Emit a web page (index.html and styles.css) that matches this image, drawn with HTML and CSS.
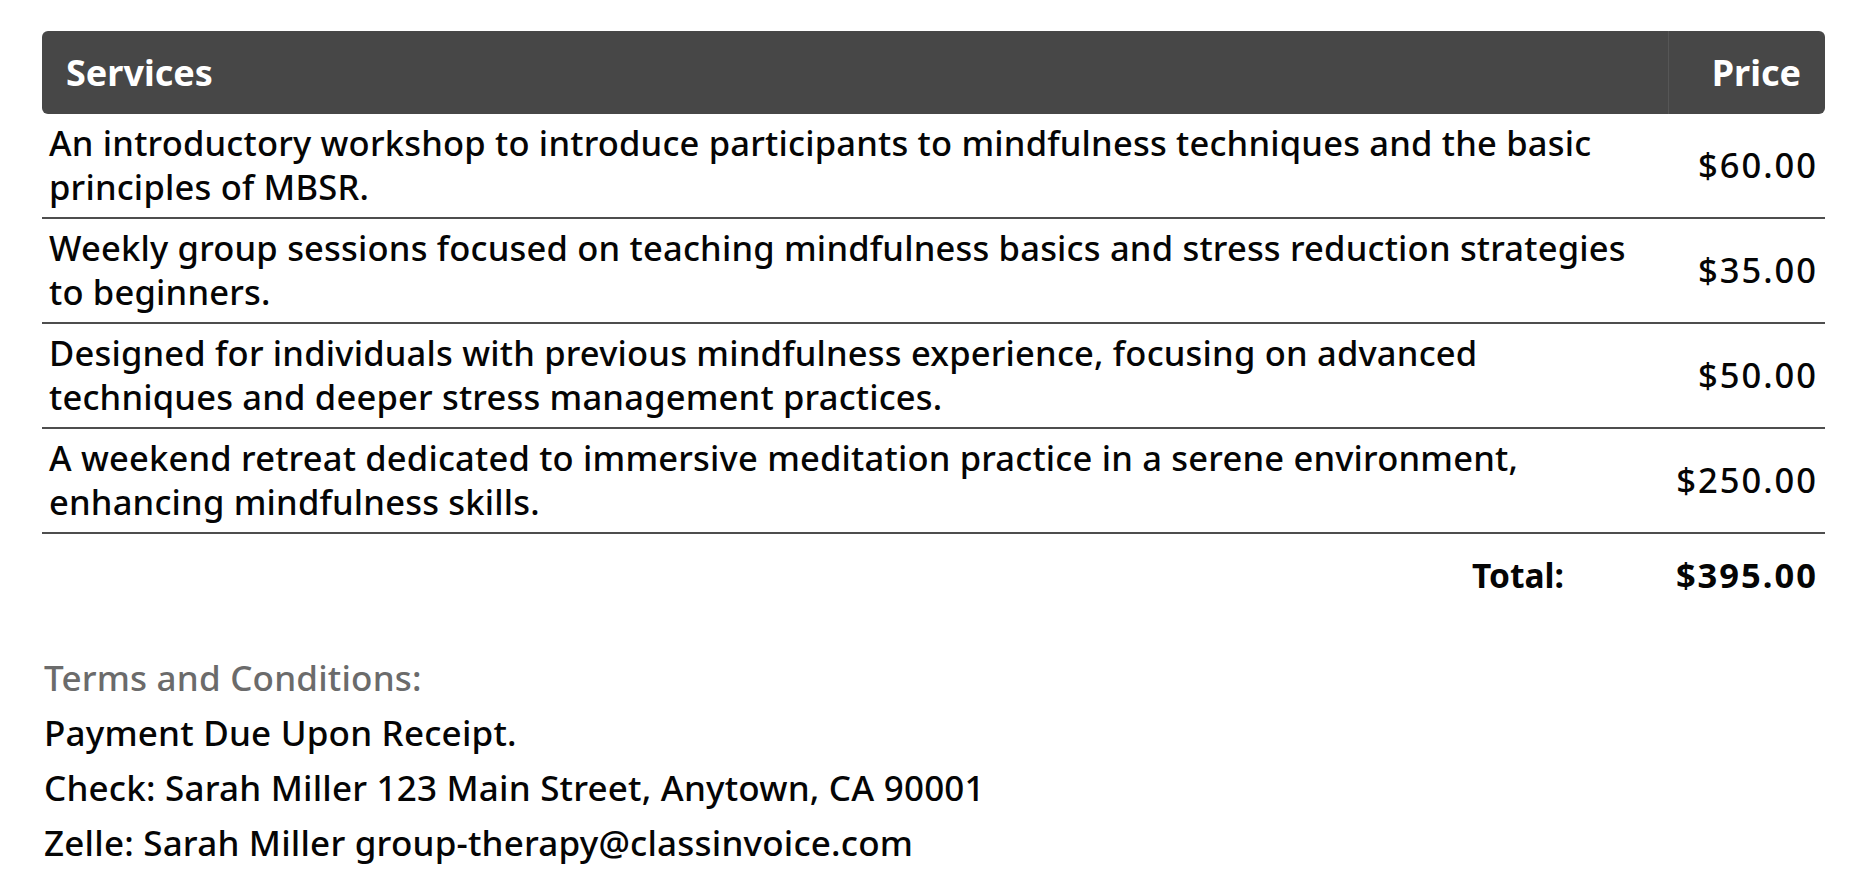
FILE: index.html
```html
<!DOCTYPE html>
<html lang="en">
<head>
<meta charset="utf-8">
<title>Invoice</title>
<link rel="stylesheet" href="styles.css">
</head>
<body>
<main class="invoice">
  <table class="items">
    <thead>
      <tr>
        <th class="col-desc">Services</th>
        <th class="col-price">Price</th>
      </tr>
    </thead>
    <tbody>
      <tr class="item">
        <td class="desc">An introductory workshop to introduce participants to mindfulness techniques and the basic<br>principles of MBSR.</td>
        <td class="price">$60.00</td>
      </tr>
      <tr class="item">
        <td class="desc">Weekly group sessions focused on teaching mindfulness basics and stress reduction strategies<br>to beginners.</td>
        <td class="price">$35.00</td>
      </tr>
      <tr class="item">
        <td class="desc">Designed for individuals with previous mindfulness experience, focusing on advanced<br>techniques and deeper stress management practices.</td>
        <td class="price">$50.00</td>
      </tr>
      <tr class="item">
        <td class="desc">A weekend retreat dedicated to immersive meditation practice in a serene environment,<br>enhancing mindfulness skills.</td>
        <td class="price">$250.00</td>
      </tr>
      <tr class="total">
        <td class="total-label">Total:</td>
        <td class="total-value">$395.00</td>
      </tr>
    </tbody>
  </table>

  <section class="terms">
    <p class="terms-title">Terms and Conditions:</p>
    <p>Payment Due Upon Receipt.</p>
    <p>Check: Sarah Miller 123 Main Street, Anytown, CA 90001</p>
    <p>Zelle: Sarah Miller group-therapy@classinvoice.com</p>
  </section>
</main>
</body>
</html>
```

FILE: styles.css
```css
html, body {
  margin: 0;
  padding: 0;
  background: #ffffff;
}

body {
  font-family: "Noto Sans", "Open Sans", sans-serif;
  font-weight: 500;
  color: #050505;
}

.invoice {
  padding: 31px 43px 0 42px;
}

.items {
  width: 100%;
  border-collapse: separate;
  border-spacing: 0;
}

.items th {
  background: #474747;
  color: #ffffff;
  font-size: 36px;
  font-weight: 700;
  line-height: 44px;
  height: 83px;
  padding: 0 24px;
  box-sizing: border-box;
}

.items th.col-desc {
  text-align: left;
  border-radius: 6px 0 0 6px;
}

.items th.col-price {
  text-align: right;
  width: 157px;
  border-left: 1px solid #565656;
  border-radius: 0 6px 6px 0;
}

.items td {
  font-size: 34.5px;
  line-height: 44px;
  padding: 7px 7px 8px;
  vertical-align: middle;
}

.item td {
  border-bottom: 2px solid #4e4e4e;
}

.desc {
  text-align: left;
  white-space: nowrap;
  letter-spacing: 0.2px;
}

.price {
  text-align: right;
  white-space: nowrap;
  letter-spacing: 2px;
}

.total td {
  padding-top: 19px;
  padding-bottom: 19px;
  font-weight: 700;
  text-align: right;
}

.total-label {
  padding-right: 104px !important;
  font-size: 33.5px !important;
}

.total-value {
  white-space: nowrap;
  letter-spacing: 2px;
}

.terms {
  margin-top: 34px;
  padding-left: 2px;
}

.terms p {
  margin: 0;
  font-size: 35px;
  line-height: 55px;
  letter-spacing: 0.2px;
}

.terms .terms-title {
  color: #6b6b6b;
}
```
